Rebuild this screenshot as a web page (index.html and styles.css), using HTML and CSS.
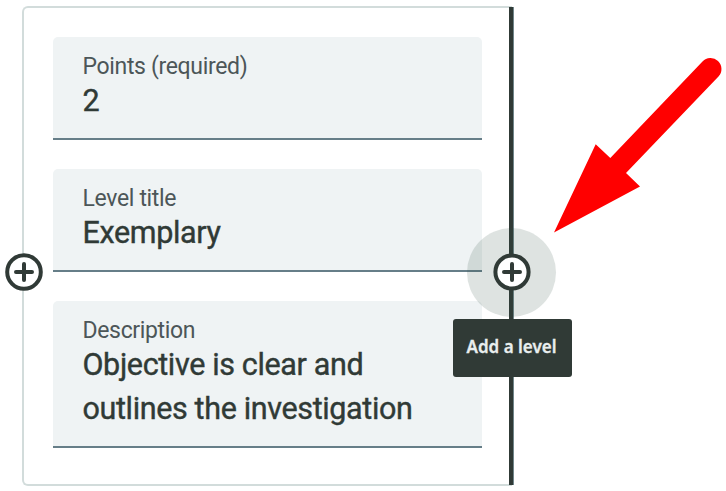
FILE: index.html
```html
<!DOCTYPE html>
<html lang="en">
<head>
<meta charset="utf-8">
<title>Rubric level</title>
<link rel="stylesheet" href="styles.css">
</head>
<body>
<main class="level-card">
  <div class="field">
    <span class="label">Points (required)</span>
    <span class="value">2</span>
  </div>
  <div class="field">
    <span class="label">Level title</span>
    <span class="value">Exemplary</span>
  </div>
  <div class="field field-tall">
    <span class="label">Description</span>
    <span class="value">Objective is clear and<br>outlines the investigation</span>
  </div>
  <div class="divider"></div>
  <div class="halo"></div>
  <svg class="add add-left" viewBox="0 0 38 38"><circle cx="19" cy="19" r="16.8"/><path d="M19 11v16M11 19h16"/></svg>
  <svg class="add add-right" viewBox="0 0 38 38"><circle cx="19" cy="19" r="16.6"/><path d="M19 11v16M11 19h16"/></svg>
  <div class="tooltip">Add a level</div>
</main>
<svg class="arrow" viewBox="0 0 186 200"><path d="M14 192.5 55.7 104.2 70.3 118 162.5 21.5A10.8 10.8 0 0 1 178.5 36.5L86 133 100 146.5Z"/></svg>
</body>
</html>
```
FILE: styles.css
```css
* { box-sizing: border-box; }

body {
  margin: 0;
  position: relative;
  width: 726px;
  height: 491px;
  overflow: hidden;
  background: #fff;
  color: #303a36;
  font-family: Roboto, sans-serif;
}

.level-card {
  position: relative;
  display: flex;
  flex-direction: column;
  gap: 29px;
  width: 490px;
  height: 480px;
  margin: 6px 0 0 22px;
  padding: 29px 28px 0 29px;
  border: 2px solid #d2dcdb;
  border-right: 0;
  border-radius: 6px 0 0 6px;
}

.field {
  display: flex;
  flex-direction: column;
  width: 429px;
  height: 103px;
  padding: 16px 0 0 29.5px;
  background: #eff3f4;
  border-bottom: 2px solid #667e88;
  border-radius: 5px 5px 0 0;
}

.field-tall { height: 147px; }

.label {
  font-size: 23px;
  line-height: 28px;
  letter-spacing: -0.34px;
  color: #4c5658;
  white-space: nowrap;
}

.value {
  font-size: 30.5px;
  line-height: 44px;
  letter-spacing: -0.36px;
  margin-top: -2px;
  white-space: nowrap;
  -webkit-text-stroke: 0.4px #303a36;
}

.divider {
  position: absolute;
  top: -1px;
  left: 485px;
  width: 5px;
  height: 478px;
  background: #303a36;
  border: solid #71868a;
  border-width: 0 1px 0 0;
}

.halo {
  position: absolute;
  left: 443px;
  top: 220px;
  width: 89px;
  height: 89px;
  border-radius: 50%;
  background: rgba(48, 78, 70, 0.16);
}

.add {
  position: absolute;
  top: 245px;
  width: 38px;
  height: 38px;
  fill: #fff;
  stroke: #303a36;
  stroke-width: 4;
  stroke-linecap: round;
}

.add-left { left: -19px; }
.add-right { left: 468.5px; }

.tooltip {
  position: absolute;
  left: 429px;
  top: 311px;
  width: 119px;
  height: 58px;
  padding-right: 2px;
  border-radius: 3px;
  background: #303a36;
  color: #e9eeee;
  font: 600 17px/55px "Noto Sans", sans-serif;
  -webkit-text-stroke: 0.3px #e9eeee;
  text-align: center;
  white-space: nowrap;
}

.arrow {
  position: absolute;
  left: 540px;
  top: 40px;
  width: 186px;
  height: 200px;
  fill: #f00;
}
```
